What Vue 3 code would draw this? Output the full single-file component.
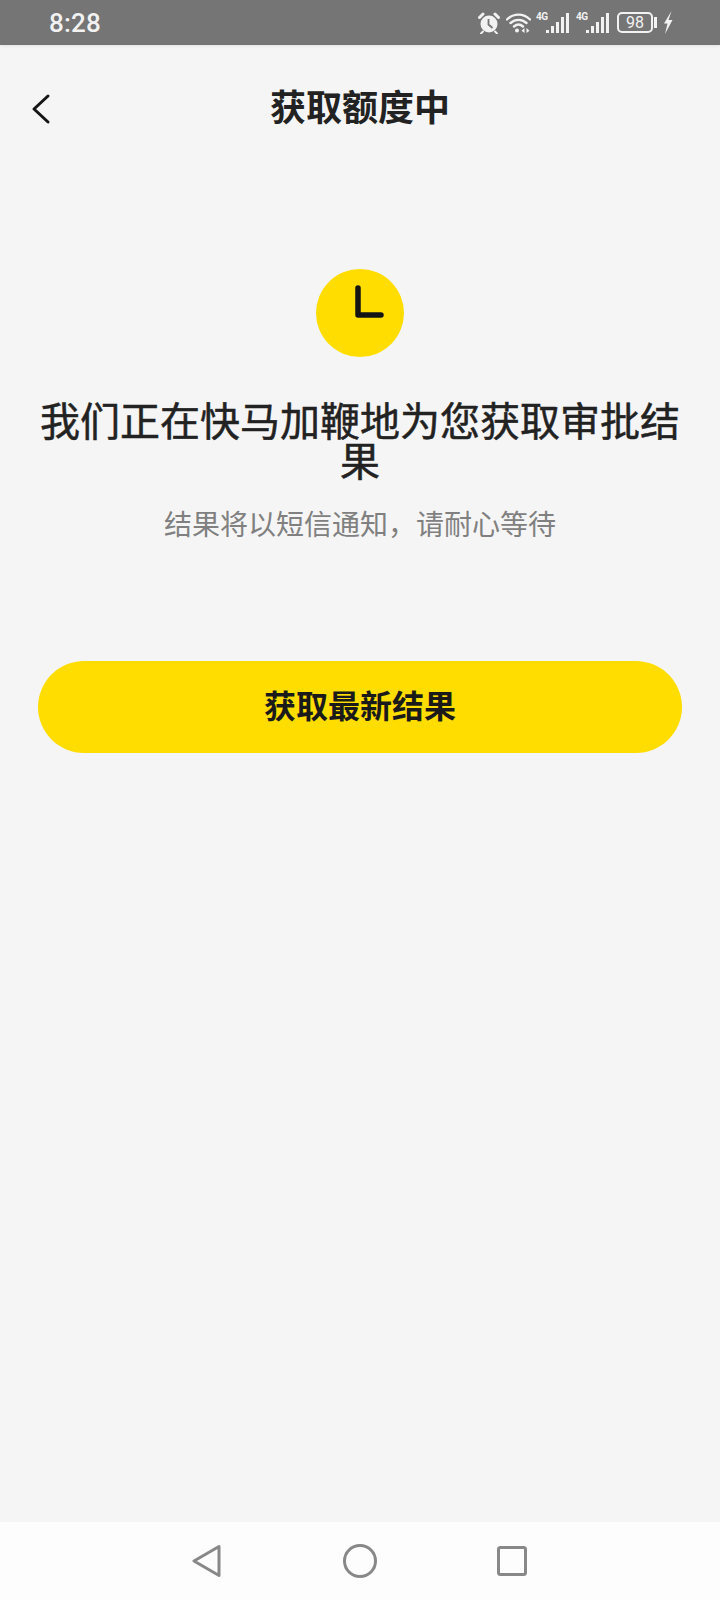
<script setup>
const signals = [0, 1]
const bars = [3, 7, 11, 16, 20]
</script>

<template>
  <div class="screen">
    <div class="status-bar">
      <span class="time">8:28</span>
      <div class="status-icons">
        <svg class="alarm" width="22" height="22" viewBox="0 0 22 22">
          <circle cx="11" cy="12" r="8.500" fill="#f2f2f2" />
          <path d="M10.500 7v5.500l4 3.500" fill="none" stroke="#757575" stroke-width="1.800" />
          <path d="M1.500 5.500l3.500-3.500M20.500 5.500L17 2" stroke="#f2f2f2" stroke-width="3" stroke-linecap="round" />
          <path d="M5 19.500l-2 2M17 19.500l2 2" stroke="#f2f2f2" stroke-width="1.800" stroke-linecap="round" />
        </svg>
        <svg class="wifi" width="25" height="21" viewBox="0 0 25 21">
          <path d="M1 7.500C7.500 1 17.500 1 24 7.500M4.500 11c4.800-4.200 11.200-4.200 16 0M8 14.500c2.800-2.400 6.200-2.400 9 0" fill="none" stroke="#f2f2f2" stroke-width="2.400" stroke-linecap="round" />
          <circle cx="11" cy="18.500" r="2" fill="#f2f2f2" />
          <path d="M18.500 16l-3 2.800 3 2.200zM20.500 16l3 2.800-3 2.200z" fill="#f2f2f2" />
        </svg>
        <div v-for="s in signals" :key="s" class="signal">
          <span class="net">4G</span>
          <div class="bars">
            <i v-for="h in bars" :key="h" :style="{ height: h + 'px' }"></i>
          </div>
        </div>
        <div class="battery"><span>98</span></div>
        <i class="battery-cap"></i>
        <svg class="bolt" width="10" height="23" viewBox="0 0 10 23">
          <path d="M8.500 0L1 12.500h3.500L2 23l7.500-14H5.500z" fill="#f2f2f2" />
        </svg>
      </div>
    </div>

    <header class="nav">
      <svg class="back" width="20" height="32" viewBox="0 0 20 32">
        <path d="M17 3L3 16l14 13" fill="none" stroke="#151515" stroke-width="3" stroke-linecap="round" stroke-linejoin="round" />
      </svg>
      <h1>获取额度中</h1>
    </header>

    <main class="content">
      <div class="clock">
        <svg width="88" height="88" viewBox="0 0 88 88">
          <path d="M42 19v27h23" fill="none" stroke="#141414" stroke-width="5.500" stroke-linecap="round" stroke-linejoin="round" />
        </svg>
      </div>
      <h2>我们正在快马加鞭地为您获取审批结果</h2>
      <p>结果将以短信通知，请耐心等待</p>
      <button class="refresh">获取最新结果</button>
    </main>

    <footer class="sys-nav">
      <svg class="tri" width="30" height="34" viewBox="0 0 30 34">
        <path d="M27 2.500L2 17l25 14.500z" fill="none" stroke="#888" stroke-width="3" stroke-linejoin="round" />
      </svg>
      <svg class="home" width="34" height="34" viewBox="0 0 34 34">
        <circle cx="17" cy="17" r="15.500" fill="none" stroke="#888" stroke-width="3" />
      </svg>
      <svg class="recent" width="30" height="30" viewBox="0 0 30 30">
        <rect x="1.500" y="1.500" width="27" height="27" rx="2" fill="none" stroke="#888" stroke-width="3" />
      </svg>
    </footer>
  </div>
</template>

<style>
html,
body {
  margin: 0;
  background: #f5f5f5;
}
</style>

<style scoped>
.screen {
  display: flex;
  flex-direction: column;
  width: 720px;
  height: 1600px;
  background: #f5f5f5;
  font-family: "Noto Sans CJK SC", "Liberation Sans", sans-serif;
}

.status-bar {
  display: flex;
  flex: 0 0 45px;
  align-items: center;
  justify-content: space-between;
  padding: 0 47px 0 49px;
  background: #757575;
  color: #f2f2f2;
  box-sizing: border-box;
  box-shadow: 0 1px 3px rgba(0, 0, 0, 0.08);
}

.time {
  font-family: Roboto, sans-serif;
  font-size: 26px;
  font-weight: 500;
  letter-spacing: 0.2px;
}

.status-icons {
  display: flex;
  align-items: center;
}

.wifi {
  margin-left: 6px;
}

.signal {
  position: relative;
  width: 33px;
  height: 20px;
  margin-left: 5px;
}

.signal + .signal {
  margin-left: 7px;
}

.net {
  position: absolute;
  top: -1px;
  left: 0;
  font-family: Roboto, sans-serif;
  font-size: 10px;
  font-weight: 700;
  letter-spacing: -0.4px;
  line-height: 10px;
}

.bars {
  position: absolute;
  right: 0;
  bottom: 0;
  display: flex;
  align-items: flex-end;
  gap: 2px;
}

.bars i {
  display: block;
  width: 3px;
  background: #f2f2f2;
}

.battery {
  display: flex;
  align-items: center;
  justify-content: center;
  box-sizing: border-box;
  width: 36px;
  height: 21px;
  margin-left: 8px;
  border: 2px solid #f2f2f2;
  border-radius: 5px;
  font-family: Roboto, sans-serif;
  font-size: 16px;
}

.battery-cap {
  display: block;
  width: 3px;
  height: 11px;
  margin-left: 1px;
  background: #f2f2f2;
}

.bolt {
  margin-left: 6px;
}

.nav {
  position: relative;
  display: flex;
  flex: 0 0 128px;
  align-items: center;
  justify-content: center;
  padding-bottom: 8px;
  box-sizing: border-box;
}

.back {
  position: absolute;
  top: 48px;
  left: 31px;
}

h1 {
  margin: 0;
  font-size: 36px;
  font-weight: 700;
  color: #222;
}

.content {
  display: flex;
  flex: 1;
  flex-direction: column;
  align-items: center;
  padding: 96px 38px 0;
}

.clock {
  width: 88px;
  height: 88px;
  border-radius: 50%;
  background: #ffdd00;
}

.clock svg {
  display: block;
}

h2 {
  margin: 42px 0 0;
  font-size: 40px;
  font-weight: 400;
  line-height: 40px;
  color: #222;
  text-align: center;
  -webkit-text-stroke: 0.5px #222;
}

p {
  margin: 26px 0 0;
  font-size: 28px;
  line-height: 36px;
  color: #808080;
}

.refresh {
  width: 100%;
  height: 92px;
  margin-top: 120px;
  padding: 0 0 6px;
  border: 0;
  border-radius: 46px;
  background: #ffdd00;
  color: #1a1a1a;
  font: inherit;
  font-size: 32px;
  font-weight: 700;
}

.sys-nav {
  display: flex;
  flex: 0 0 78px;
  align-items: center;
  padding-left: 192px;
  box-sizing: border-box;
  background: #fdfdfd;
}

.home {
  margin-left: 121px;
}

.recent {
  margin-left: 120px;
}
</style>
